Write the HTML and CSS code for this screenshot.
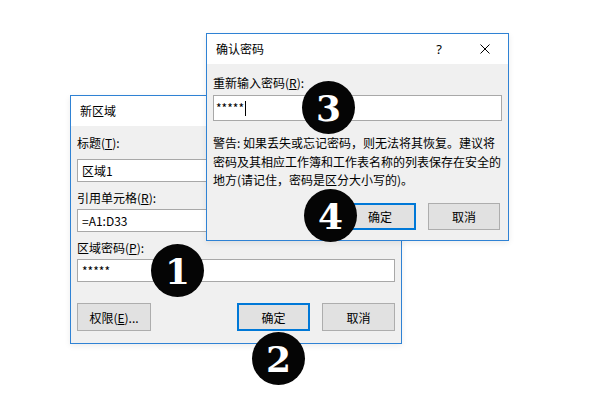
FILE: index.html
```html
<!DOCTYPE html>
<html>
<head>
    <meta charset="utf-8">
    <link rel="stylesheet" href="styles.css">
</head>
<body>
    <div class="desk">
        <!-- 新区域 -->
        <div class="dialog area-dialog">
            <div class="titlebar"><span class="title">新区域</span></div>
            <div class="dialog-body">
                <div class="field">
                    <div class="label">标题(<u>T</u>):</div>
                    <div class="input">区域1</div>
                </div>
                <div class="field">
                    <div class="label">引用单元格(<u>R</u>):</div>
                    <div class="input">=A1:D33</div>
                </div>
                <div class="field">
                    <div class="label">区域密码(<u>P</u>):</div>
                    <div class="input">*****</div>
                </div>
                <div class="buttons">
                    <div class="btn wide">权限(<u>E</u>)...</div>
                    <div class="btn default push">确定</div>
                    <div class="btn">取消</div>
                </div>
            </div>
        </div>

        <!-- 确认密码 -->
        <div class="dialog confirm-dialog">
            <div class="titlebar">
                <span class="title">确认密码</span>
                <span class="help">?</span>
                <svg class="close" width="10" height="10" viewBox="0 0 10 10">
                    <path d="M0.5 0.5 L9.5 9.5 M9.5 0.5 L0.5 9.5" stroke="#000" stroke-width="1" fill="none"/>
                </svg>
            </div>
            <div class="dialog-body">
                <div class="label">重新输入密码(<u>R</u>):</div>
                <div class="input tall">*****<span class="caret"></span></div>
                <p class="warning">警告: 如果丢失或忘记密码，则无法将其恢复。建议将<br>密码及其相应工作簿和工作表名称的列表保存在安全的<br>地方(请记住，密码是区分大小写的)。</p>
                <div class="buttons right">
                    <div class="btn default">确定</div>
                    <div class="btn">取消</div>
                </div>
            </div>
        </div>

        <div class="step step-1">1</div>
        <div class="step step-2">2</div>
        <div class="step step-3">3</div>
        <div class="step step-4">4</div>
    </div>
</body>
</html>
```

FILE: styles.css
```css
:root {
    --window-border: #2f82d4;
    --face: #f0f0f0;
    --btn-face: #e1e1e1;
    --btn-border: #adadad;
    --focus: #0078d7;
    --field-border: #a8a8a8;
}

body {
    margin: 0;
    background: #fff;
    font-family: "Noto Sans CJK SC", "Noto Sans", sans-serif;
    font-size: 12px;
    color: #000;
}

.desk {
    position: relative;
    width: 589px;
    height: 412px;
    overflow: hidden;
}

.dialog {
    position: absolute;
    box-sizing: border-box;
    display: flex;
    flex-direction: column;
    border: 1px solid var(--window-border);
    background: var(--face);
    box-shadow: 0 2px 6px rgba(0, 0, 0, 0.08);
}

.area-dialog {
    left: 70px;
    top: 95px;
    width: 332px;
    height: 249px;
}

.confirm-dialog {
    left: 206px;
    top: 33px;
    width: 303px;
    height: 208px;
}

.titlebar {
    height: 30px;
    flex: none;
    display: flex;
    align-items: center;
    padding: 0 18px 0 9px;
    background: #fff;
    line-height: 16px;
}

.help {
    margin-left: auto;
    margin-right: 38px;
    font-family: "Noto Sans", sans-serif;
    font-size: 13px;
}

.close {
    display: block;
}

.dialog-body {
    flex: 1;
    display: flex;
    flex-direction: column;
    padding: 9px 6px 0;
}

.label {
    line-height: 16px;
    margin-bottom: 3px;
}

.field {
    margin-bottom: 8px;
}

.field:first-child .label {
    margin-bottom: 8px;
}

.input {
    box-sizing: border-box;
    height: 23px;
    display: flex;
    align-items: center;
    padding-left: 4px;
    background: #fff;
    border: 1px solid var(--field-border);
    line-height: 16px;
}

.buttons {
    display: flex;
    gap: 12px;
    margin-top: 13px;
}

.buttons.right {
    justify-content: flex-end;
    padding-right: 2px;
}

.push {
    margin-left: auto;
}

.btn {
    box-sizing: border-box;
    width: 73px;
    height: 28px;
    display: flex;
    align-items: center;
    justify-content: center;
    background: var(--btn-face);
    border: 1px solid var(--btn-border);
}

.btn.wide {
    width: 74px;
}

.btn.default {
    border: 2px solid var(--focus);
}

/* 确认密码 window */
.confirm-dialog .dialog-body {
    padding-top: 11px;
}

.confirm-dialog .label {
    margin-bottom: 4px;
}

.input.tall {
    height: 26px;
    padding-left: 2px;
}

.caret {
    display: inline-block;
    width: 1px;
    height: 15px;
    margin-left: 1px;
    background: #000;
}

.warning {
    margin: 13px 0 0;
    line-height: 18.5px;
    white-space: nowrap;
}

.confirm-dialog .buttons {
    margin-top: 13px;
}

.confirm-dialog .btn {
    width: 72px;
    height: 27px;
}

/* numbered markers */
.step {
    position: absolute;
    width: 53px;
    height: 53px;
    border-radius: 50%;
    background: #050505;
    color: #fff;
    display: flex;
    align-items: center;
    justify-content: center;
    font-family: "DejaVu Serif", serif;
    font-weight: 700;
    font-size: 36px;
    line-height: 1;
}

.step-1 { left: 151px; top: 244px; }
.step-2 { left: 252px; top: 332px; }
.step-3 { left: 302px; top: 81px; }
.step-4 { left: 304px; top: 189px; }
```
